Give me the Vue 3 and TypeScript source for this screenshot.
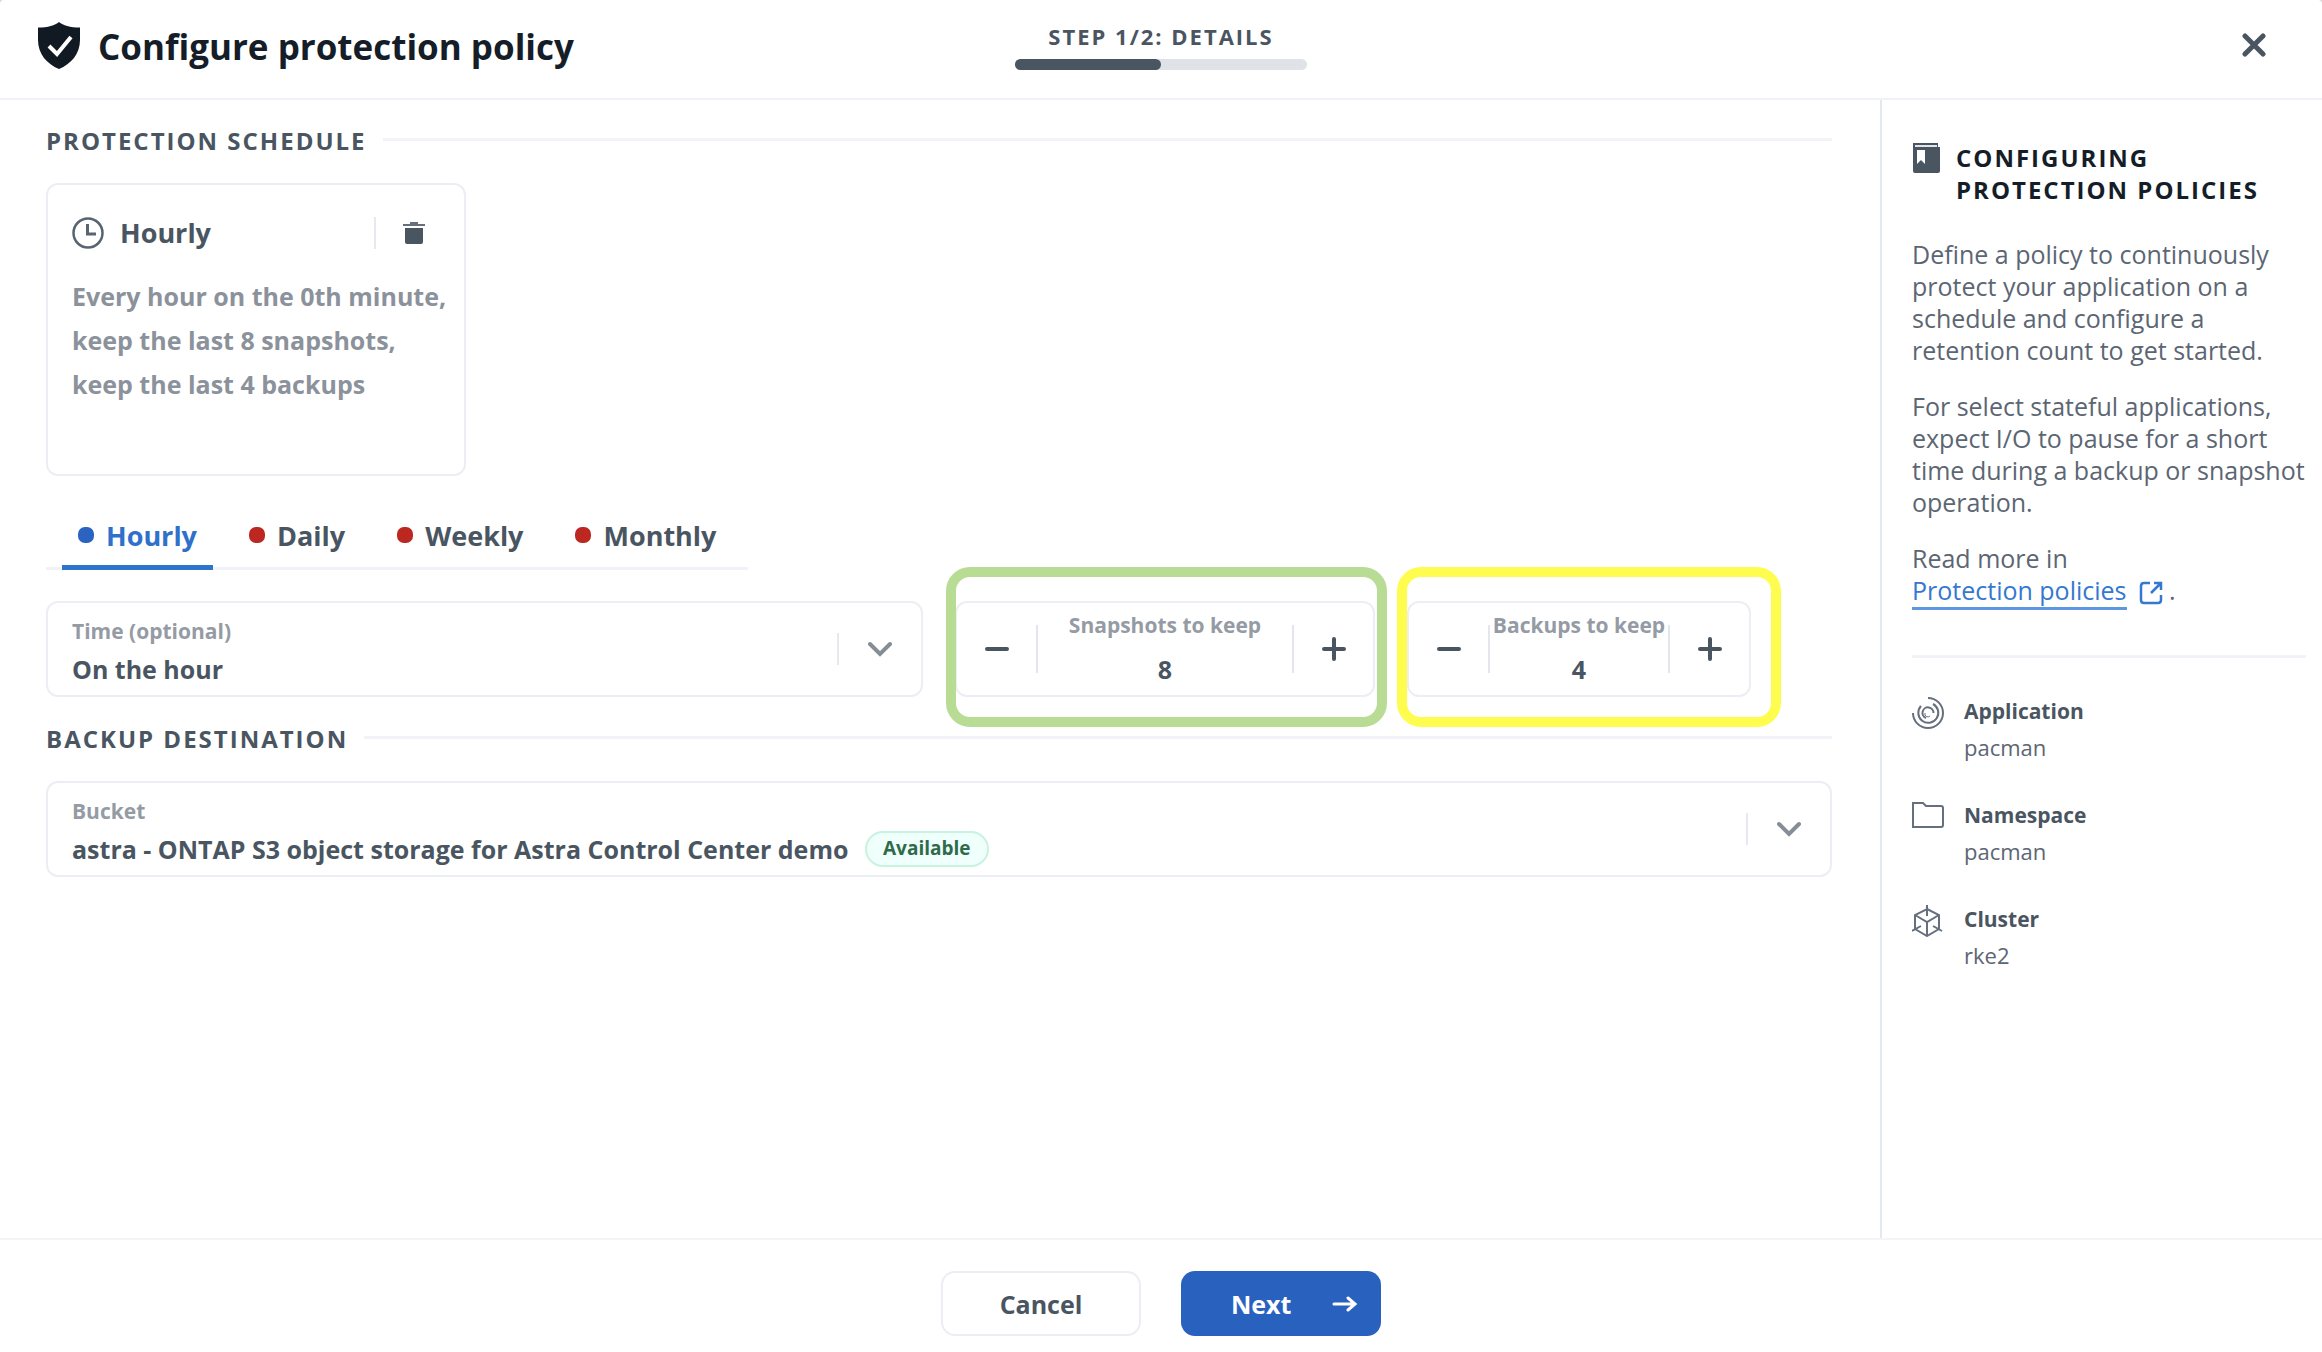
<script setup lang="ts">
import { ref } from 'vue'

interface Tab {
  id: string
  label: string
}

const tabs: Tab[] = [
  { id: 'hourly', label: 'Hourly' },
  { id: 'daily', label: 'Daily' },
  { id: 'weekly', label: 'Weekly' },
  { id: 'monthly', label: 'Monthly' },
]

const activeTab = ref('hourly')
const time = ref('On the hour')
const bucket = ref('astra - ONTAP S3 object storage for Astra Control Center demo')
const snapshots = ref(8)
const backups = ref(4)
</script>

<template>
  <div class="dialog">
    <header class="header">
      <div class="brand">
        <svg class="shield" viewBox="0 0 42 47" aria-hidden="true">
          <path d="M21 0C25 3.500 32 5.500 42 5.500V18C42 32 33 42 21 47C9 42 0 32 0 18V5.500C10 5.500 17 3.500 21 0Z" fill="#111922" />
          <path d="M11 24L19 32L33 15" fill="none" stroke="#fff" stroke-width="4" />
        </svg>
        <h1>Configure protection policy</h1>
      </div>
      <div class="steps">
        <span class="step-label">STEP 1/2: DETAILS</span>
        <div class="track"><div class="fill"></div></div>
      </div>
      <button class="close" type="button" aria-label="Close">
        <svg width="24" height="24" viewBox="0 0 24 24"><path d="M3 3L21 21M21 3L3 21" stroke="#4a5562" stroke-width="5" stroke-linecap="round" /></svg>
      </button>
    </header>

    <div class="body">
      <main class="main">
        <h2 class="section-title">PROTECTION SCHEDULE</h2>

        <article class="card">
          <div class="card-head">
            <svg width="32" height="32" viewBox="0 0 32 32" fill="none" stroke="#5a6471" stroke-width="2.500" aria-hidden="true">
              <circle cx="16" cy="16" r="14.500" />
              <path d="M15.500 7V17H24" stroke-width="3" />
            </svg>
            <h3>Hourly</h3>
            <button class="delete" type="button" aria-label="Delete hourly schedule">
              <svg width="22" height="24" viewBox="0 0 22 24">
                <path d="M7 1H15V3H22V5H0V3H7Z" fill="#66707c" />
                <path d="M2 7H20V21Q20 23 18 23H4Q2 23 2 21Z" fill="#4a5562" />
              </svg>
            </button>
          </div>
          <p>Every hour on the 0th minute,<br />keep the last 8 snapshots,<br />keep the last 4 backups</p>
        </article>

        <div class="tabs" role="tablist">
          <button
            v-for="tab in tabs"
            :key="tab.id"
            class="tab"
            :class="{ active: tab.id === activeTab }"
            type="button"
            role="tab"
            :aria-selected="tab.id === activeTab"
            @click="activeTab = tab.id"
          >
            <span class="dot"></span>{{ tab.label }}
          </button>
        </div>

        <div class="row">
          <div class="field">
            <div class="field-text">
              <label for="time">Time (optional)</label>
              <select id="time" v-model="time">
                <option>On the hour</option>
              </select>
            </div>
            <span class="arrow">
              <svg width="24" height="16" viewBox="0 0 24 16"><path d="M2 3L12 13L22 3" fill="none" stroke="#868d96" stroke-width="4" stroke-linecap="round" /></svg>
            </span>
          </div>

          <div class="stepper green">
            <button type="button" aria-label="Fewer snapshots" @click="snapshots--">
              <svg width="24" height="24" viewBox="0 0 24 24"><path d="M2 12H22" stroke="#4a5562" stroke-width="4" stroke-linecap="round" /></svg>
            </button>
            <div class="count">
              <label for="snapshots">Snapshots to keep</label>
              <input id="snapshots" v-model.number="snapshots" type="text" inputmode="numeric" />
            </div>
            <button type="button" aria-label="More snapshots" @click="snapshots++">
              <svg width="24" height="24" viewBox="0 0 24 24"><path d="M2 12H22M12 2V22" stroke="#4a5562" stroke-width="4" stroke-linecap="round" /></svg>
            </button>
          </div>

          <div class="stepper yellow">
            <button type="button" aria-label="Fewer backups" @click="backups--">
              <svg width="24" height="24" viewBox="0 0 24 24"><path d="M2 12H22" stroke="#4a5562" stroke-width="4" stroke-linecap="round" /></svg>
            </button>
            <div class="count">
              <label for="backups">Backups to keep</label>
              <input id="backups" v-model.number="backups" type="text" inputmode="numeric" />
            </div>
            <button type="button" aria-label="More backups" @click="backups++">
              <svg width="24" height="24" viewBox="0 0 24 24"><path d="M2 12H22M12 2V22" stroke="#4a5562" stroke-width="4" stroke-linecap="round" /></svg>
            </button>
          </div>
        </div>

        <h2 class="section-title">BACKUP DESTINATION</h2>

        <div class="field">
          <div class="field-text">
            <label for="bucket">Bucket</label>
            <div class="value">
              <select id="bucket" v-model="bucket">
                <option>astra - ONTAP S3 object storage for Astra Control Center demo</option>
              </select>
              <span class="pill">Available</span>
            </div>
          </div>
          <span class="arrow">
            <svg width="24" height="16" viewBox="0 0 24 16"><path d="M2 3L12 13L22 3" fill="none" stroke="#868d96" stroke-width="4" stroke-linecap="round" /></svg>
          </span>
        </div>
      </main>

      <aside class="aside">
        <div class="aside-title">
          <svg width="28" height="32" viewBox="0 0 28 32" aria-hidden="true">
            <path d="M1 1H26V5H28V29Q28 31 26 31H3Q1 31 1 29Z" fill="#4a5562" />
            <path d="M3 3H25V5H3Z" fill="#e3e5e8" />
            <path d="M5 8H13V22L9 18L5 22Z" fill="#fff" />
          </svg>
          <h2>CONFIGURING PROTECTION POLICIES</h2>
        </div>
        <p>Define a policy to continuously protect your application on a schedule and configure a retention count to get started.</p>
        <p>For select stateful applications, expect I/O to pause for a short time during a backup or snapshot operation.</p>
        <p>
          Read more in<br />
          <a href="#">Protection policies</a>
          <svg class="external" width="24" height="24" viewBox="0 0 24 24" fill="none" stroke="#3478cf" stroke-width="2.500" aria-hidden="true">
            <path d="M11 2H5Q2 2 2 5V19Q2 22 5 22H19Q22 22 22 19V14M15 2H22V9M22 2L12 12" />
          </svg>
          .
        </p>
        <hr />
        <dl>
          <div class="item">
            <svg width="32" height="32" viewBox="0 0 32 32" fill="none" stroke="#66707c" stroke-width="2" aria-hidden="true">
              <path d="M16 1A15 15 0 1 1 1 16" />
              <path d="M9 9A10 10 0 1 0 21 7" />
              <path d="M14 21A5.500 5.500 0 1 1 21.500 16" />
              <path d="M13 16A3 3 0 0 0 18 19" stroke-width="1" />
            </svg>
            <div><dt>Application</dt><dd>pacman</dd></div>
          </div>
          <div class="item">
            <svg width="32" height="32" viewBox="0 0 32 32" fill="none" stroke="#66707c" stroke-width="2" aria-hidden="true">
              <path d="M1 2H11L14 5H29Q31 5 31 7V24Q31 26 29 26H1Z" />
            </svg>
            <div><dt>Namespace</dt><dd>pacman</dd></div>
          </div>
          <div class="item">
            <svg width="32" height="32" viewBox="0 0 32 32" fill="none" stroke="#66707c" stroke-width="2" aria-hidden="true">
              <path d="M15 4L27 10V24L15 31L3 24V10ZM3 10L15 17L27 10M15 17V31M15 0V11M0 26L9 21M30 26L21 21" />
            </svg>
            <div><dt>Cluster</dt><dd>rke2</dd></div>
          </div>
        </dl>
      </aside>
    </div>

    <footer class="footer">
      <button class="btn cancel" type="button">Cancel</button>
      <button class="btn next" type="button">
        Next
        <svg width="26" height="16" viewBox="0 0 26 16" aria-hidden="true"><path d="M2 8H22M16 2L23 8L16 14" fill="none" stroke="#fff" stroke-width="3" stroke-linecap="round" /></svg>
      </button>
    </footer>
  </div>
</template>

<style>
body {
  margin: 0;
  background: #d5d8dc;
}
</style>

<style scoped>
* {
  box-sizing: border-box;
}
.dialog {
  display: flex;
  flex-direction: column;
  min-height: 100vh;
  border-radius: 4px 4px 0 0;
  background: #fff;
  color: #4a5562;
  font-family: "Open Sans", "Noto Sans", sans-serif;
  font-size: 25px;
}
h1, h2, h3, p, dl, dd {
  margin: 0;
}
h1, h2, h3, dt, label {
  font-weight: 700;
}
button, select, input {
  padding: 0;
  border: 0;
  background: none;
  color: inherit;
  font: inherit;
  font-weight: 700;
}
svg {
  display: block;
  flex: none;
}

.header {
  display: grid;
  grid-template-columns: 1fr auto 1fr;
  align-items: center;
  height: 100px;
  padding: 0 38px 8px;
  border-bottom: 2px solid #f1f2f7;
}
.brand {
  display: flex;
  align-items: center;
  gap: 18px;
  color: #151d28;
}
.shield {
  width: 42px;
  height: 47px;
}
h1 {
  padding-top: 4px;
  font-size: 35px;
  line-height: 48px;
}
.steps {
  width: 292px;
  text-align: center;
}
.step-label {
  display: block;
  margin-bottom: 7px;
  font-size: 22px;
  font-weight: 700;
  line-height: 32px;
  letter-spacing: 2px;
}
.track {
  height: 11px;
  border-radius: 6px;
  background: #dfe2e7;
}
.fill {
  width: 50%;
  height: 100%;
  border-radius: 6px;
  background: #4a5562;
}
.close {
  display: flex;
  align-items: center;
  justify-content: center;
  justify-self: end;
  width: 44px;
  height: 44px;
  margin-right: 8px;
}

.body {
  display: flex;
  flex: 1;
}
.main {
  flex: 1;
  min-width: 0;
  padding: 23px 48px 24px 46px;
}
.section-title {
  display: flex;
  align-items: center;
  gap: 16px;
  margin-bottom: 24px;
  font-size: 24px;
  line-height: 36px;
  letter-spacing: 2px;
}
.section-title::after {
  content: "";
  flex: 1;
  height: 3px;
  margin-bottom: 4px;
  background: #f2f3f8;
}

.card {
  width: 420px;
  height: 293px;
  padding: 32px 16px 24px 24px;
  border: 2px solid #eceef4;
  border-radius: 12px;
}
.card-head {
  display: flex;
  align-items: center;
  gap: 16px;
  height: 32px;
  margin-bottom: 25px;
}
h3 {
  flex: 1;
  font-size: 27px;
  line-height: 32px;
}
.delete {
  display: flex;
  align-items: center;
  justify-content: center;
  width: 74px;
  height: 32px;
  padding-left: 4px;
  border-left: 2px solid #e6e9ef;
}
.card p {
  color: #8b929b;
  font-weight: 700;
  line-height: 44px;
  white-space: nowrap;
}

.tabs {
  display: flex;
  gap: 20px;
  width: max-content;
  margin: 24px 0 31px;
  padding: 0 16px;
  box-shadow: inset 0 -3px #f1f2f7;
}
.tab {
  display: flex;
  align-items: center;
  gap: 12px;
  height: 70px;
  padding: 0 16px;
  font-size: 27px;
}
.dot {
  width: 16px;
  height: 16px;
  border-radius: 7px;
  background: #bd2722;
}
.tab.active {
  box-shadow: inset 0 -5px #2f74cc;
  color: #2f70ca;
}
.tab.active .dot {
  background: #2a63c0;
}

.row {
  display: grid;
  grid-template-columns: 877fr 420fr 344fr 49fr;
  gap: 32px;
  margin-bottom: 24px;
}
.field {
  display: flex;
  align-items: center;
  height: 96px;
  border: 2px solid #eceef4;
  border-radius: 12px;
}
.field-text {
  display: flex;
  flex: 1;
  flex-direction: column;
  min-width: 0;
  padding: 4px 0 0 24px;
}
label {
  color: #959ba4;
  font-size: 21px;
  line-height: 36px;
}
.field select {
  height: 40px;
  appearance: none;
  line-height: 40px;
}
.value {
  display: flex;
  align-items: center;
  gap: 16px;
}
.pill {
  height: 36px;
  padding: 0 16px;
  border: 2px solid #c9f2df;
  border-radius: 18px;
  background: #effffb;
  color: #2f6b4b;
  font-size: 19px;
  font-weight: 700;
  line-height: 30px;
}
.arrow {
  display: flex;
  align-items: center;
  justify-content: center;
  width: 84px;
  height: 32px;
  border-left: 2px solid #e6e9ef;
}

.stepper {
  position: relative;
  display: flex;
  align-items: center;
  height: 96px;
  border: 2px solid #eceef4;
  border-radius: 12px;
}
.stepper button {
  display: flex;
  flex: none;
  align-items: center;
  justify-content: center;
  width: 81px;
  height: 48px;
}
.stepper button:first-child {
  border-right: 2px solid #e3e7ec;
}
.stepper button:last-child {
  border-left: 2px solid #e3e7ec;
}
.count {
  display: flex;
  flex: 1;
  flex-direction: column;
  align-self: flex-start;
  min-width: 0;
  text-align: center;
}
.count label {
  line-height: 44px;
  white-space: nowrap;
}
.count input {
  width: 100%;
  height: 44px;
  text-align: center;
}
/* Coloured frames that call out the two retention counters */
.stepper::after {
  content: "";
  position: absolute;
  inset: -36px -14px -32px -11px;
  border: 10px solid #b9dc94;
  border-radius: 24px;
  pointer-events: none;
}
.stepper.yellow::after {
  right: -32px;
  left: -12px;
  border-color: #fffc50;
}

.aside {
  width: 442px;
  padding: 42px 8px 24px 30px;
  border-left: 2px solid #e4e9ee;
}
.aside-title {
  display: flex;
  gap: 16px;
  margin-bottom: 32px;
  color: #151d28;
}
.aside-title h2 {
  font-size: 24px;
  line-height: 32px;
  letter-spacing: 2px;
}
.aside p {
  margin-bottom: 24px;
  color: #5c6673;
  line-height: 32px;
}
a {
  border-bottom: 3px solid #5c97e0;
  color: #3478cf;
  text-decoration: none;
}
.external {
  display: inline-block;
  margin-left: 12px;
  vertical-align: -5px;
}
hr {
  height: 3px;
  margin: 49px 8px 35px 0;
  border: 0;
  background: #f2f3f8;
}
.item {
  display: flex;
  gap: 20px;
  margin-bottom: 32px;
  font-size: 22px;
  line-height: 36px;
}
.item svg {
  margin-top: 4px;
}
dt {
  font-size: 21px;
}
dd {
  color: #5c6673;
}

.footer {
  display: flex;
  justify-content: center;
  gap: 40px;
  padding: 31px 0 16px;
  border-top: 2px solid #f2f4f8;
}
.btn {
  display: flex;
  align-items: center;
  justify-content: center;
  width: 200px;
  height: 65px;
  border-radius: 14px;
}
.cancel {
  border: 2px solid #eceef4;
}
.next {
  justify-content: space-between;
  padding: 0 23px 0 50px;
  background: #2962be;
  color: #fff;
}
</style>
